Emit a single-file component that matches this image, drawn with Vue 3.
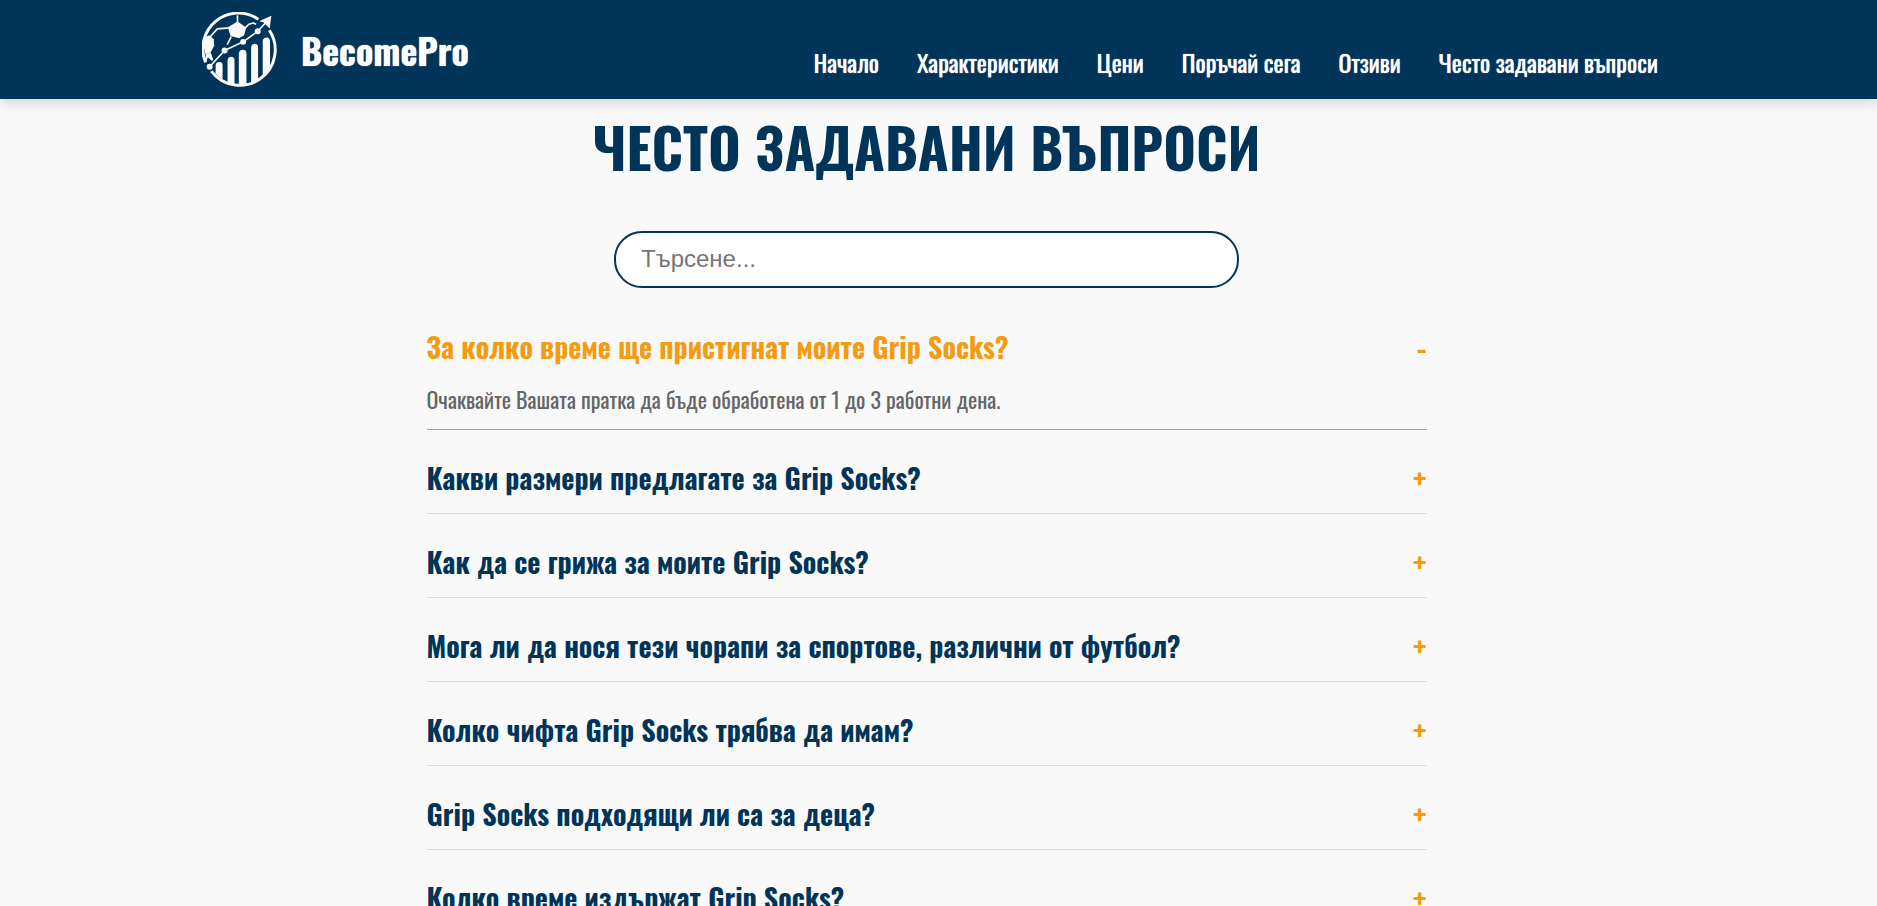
<script setup>
import { computed, ref } from 'vue'

const links = [
  { label: 'Начало', href: '#home' },
  { label: 'Характеристики', href: '#features' },
  { label: 'Цени', href: '#pricing' },
  { label: 'Поръчай сега', href: '#order' },
  { label: 'Отзиви', href: '#reviews' },
  { label: 'Често задавани въпроси', href: '#faq' },
]

const faqs = [
  {
    question: 'За колко време ще пристигнат моите Grip Socks?',
    answer: 'Очаквайте Вашата пратка да бъде обработена от 1 до 3 работни дена.',
  },
  { question: 'Какви размери предлагате за Grip Socks?' },
  { question: 'Как да се грижа за моите Grip Socks?' },
  { question: 'Мога ли да нося тези чорапи за спортове, различни от футбол?' },
  { question: 'Колко чифта Grip Socks трябва да имам?' },
  { question: 'Grip Socks подходящи ли са за деца?' },
  { question: 'Колко време издържат Grip Socks?' },
]

const query = ref('')
const open = ref(faqs[0].question)

const visible = computed(() =>
  faqs.filter((f) => f.question.toLowerCase().includes(query.value.trim().toLowerCase()))
)

function toggle(question) {
  open.value = open.value === question ? '' : question
}
</script>

<template>
  <div class="page">
    <header class="header">
      <a class="brand" href="#home">
        <svg class="logo" viewBox="36 36 226 226" aria-hidden="true">
          <g fill="none" stroke="#fafafa" stroke-linecap="butt" stroke-linejoin="round">
            <path d="M206 58A107 107 0 0 0 47 188" stroke-width="9" />
            <path d="M64 214A107 107 0 0 0 239 91" stroke-width="9" />
            <path d="M143 46V70M119 84L82 87L64 107L52 118M164 86L177 73L190 69L199 73M124 110L112 134M54 170L68 182" stroke-width="5" />
            <path d="M59 201L104 152L160 126L204 94L232 64" stroke-width="5" />
          </g>
          <g fill="#fafafa">
            <path d="M143 65L169 83L163 106L148 115L122 108L114 82Z" />
            <path d="M44 117Q50 107 60 107L71 118L73 137L62 158L47 164L41 140Z" />
            <path d="M47 164L62 158L70 179L64 181L55 168L49 187Z" />
            <path d="M245 47L240 86L231 77L221 67L208 64Z" />
            <circle cx="59" cy="201" r="9" />
            <circle cx="104" cy="152" r="9" />
            <circle cx="160" cy="126" r="9" />
            <circle cx="204" cy="94" r="9" />
            <path d="M77 222V197Q78 187 88 187Q98 187 98 197V240Z" />
            <path d="M113 247V182Q114 171 124 171Q134 171 134 182V254H113Z" />
            <path d="M147 256V162Q148 150 159 150Q170 150 170 162V256Z" />
            <path d="M184 253V144Q185 132 195 132Q205 132 205 144V244Z" />
            <path d="M219 236V125Q220 113 230 113Q241 113 241 125V207Z" />
          </g>
        </svg>
        <span class="name">BecomePro</span>
      </a>
      <nav class="nav" aria-label="Основна навигация">
        <a v-for="link in links" :key="link.href" :href="link.href">{{ link.label }}</a>
      </nav>
    </header>

    <main id="faq" class="main">
      <h1 class="title">ЧЕСТО ЗАДАВАНИ ВЪПРОСИ</h1>
      <input
        v-model="query"
        class="search"
        type="search"
        placeholder="Търсене..."
        aria-label="Търсене"
      />
      <section class="list">
        <article
          v-for="item in visible"
          :key="item.question"
          class="item"
          :class="{ open: open === item.question }"
        >
          <h2 class="heading">
            <button
              class="question"
              type="button"
              :aria-expanded="open === item.question"
              @click="toggle(item.question)"
            >
              <span>{{ item.question }}</span>
              <span class="sign">{{ open === item.question ? '-' : '+' }}</span>
            </button>
          </h2>
          <p v-if="open === item.question && item.answer" class="answer">{{ item.answer }}</p>
        </article>
      </section>
    </main>
  </div>
</template>

<style>
html {
  overflow: hidden auto;
  scrollbar-width: none;
}

body {
  margin: 0;
  background: #f9f9f9;
}
</style>

<style scoped>
.page {
  font-family: Oswald, 'Liberation Sans Narrow', 'Liberation Sans', sans-serif;
  color: #003459;
}

.header {
  position: sticky;
  top: 0;
  z-index: 1;
  box-sizing: border-box;
  display: flex;
  align-items: center;
  justify-content: space-between;
  padding: 12px 219px 12px 202px;
  background: #003459;
  box-shadow: 0 4px 12px rgba(0, 0, 0, 0.15);
}

.brand {
  display: flex;
  align-items: center;
  gap: 24px;
  color: #fff;
  text-decoration: none;
}

.logo {
  width: 75px;
  height: 75px;
}

.name {
  font-size: 36px;
  line-height: 48px;
  font-weight: 700;
  text-shadow: 0 0 1px #fff;
}

.nav {
  display: flex;
  gap: 38px;
  padding-top: 24px;
}

.nav a {
  color: #fff;
  font-size: 24px;
  line-height: 28px;
  font-weight: 400;
  text-shadow: 0 0 1px #fff;
  text-decoration: none;
  white-space: nowrap;
}

.main {
  display: flex;
  flex-direction: column;
  align-items: center;
  padding: 5px 24px 48px 0;
}

.title {
  margin: 0;
  font-size: 56px;
  line-height: 84px;
  font-weight: 700;
}

.search {
  box-sizing: border-box;
  width: 625px;
  max-width: 100%;
  height: 57px;
  margin: 43px 0 11px;
  padding: 0 25px 2px;
  border: 2px solid #003459;
  border-radius: 28px;
  background: #fff;
  color: #333;
  font-family: 'Liberation Sans', Arial, sans-serif;
  font-size: 24px;
  outline: none;
  appearance: none;
}

.search::placeholder {
  color: #757575;
}

.list {
  width: 100%;
  max-width: 1000px;
}

.item {
  padding: 24px 0 12px;
  border-bottom: 1px solid #ddd;
}

.item.open {
  border-color: #f39c12;
}

.heading {
  margin: 0;
  font-size: 28px;
}

.question {
  display: flex;
  align-items: center;
  justify-content: space-between;
  width: 100%;
  padding: 0;
  border: 0;
  background: none;
  color: inherit;
  font: inherit;
  font-weight: 700;
  line-height: 47px;
  text-align: left;
  cursor: pointer;
}

.open .question,
.sign {
  color: #f39c12;
}

.sign {
  font-size: 30px;
}

.answer {
  margin: 11px 0 0;
  color: #666;
  font-size: 22px;
  line-height: 36px;
}
</style>
